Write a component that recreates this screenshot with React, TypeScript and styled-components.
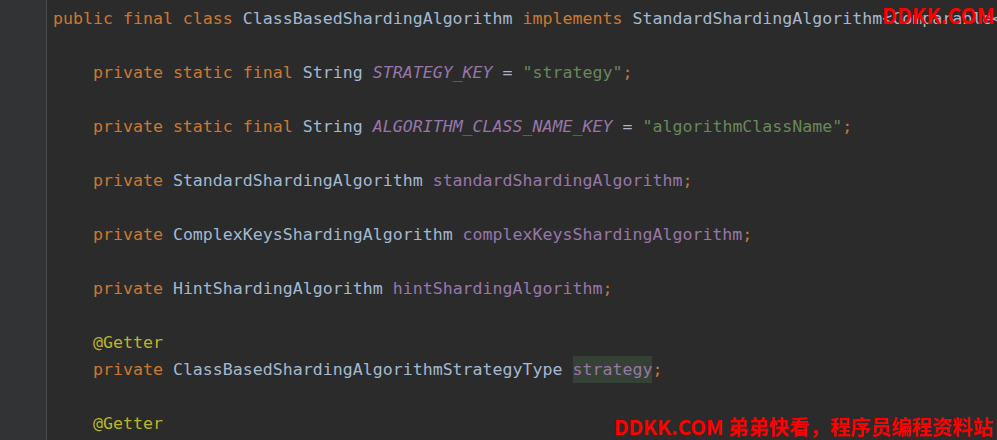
import styled, { createGlobalStyle } from "styled-components";

type Tok = [string, string?];

const C = {
  kw: "#cc7832",
  type: "#a4b8d0",
  plain: "#a9b7c6",
  field: "#9876aa",
  str: "#6a8759",
  ann: "#bbb529",
};

const lines: (Tok[] | null)[] = [
  [
    ["public final class ", "kw"],
    ["ClassBasedShardingAlgorithm ", "type"],
    ["implements ", "kw"],
    ["StandardShardingAlgorithm<Comparable<?>>", "type"],
    [", ", "kw"],
    ["ComplexKeysShardingAlgorithm<Comparable<?>>", "type"],
  ],
  null,
  [
    ["    private static final ", "kw"],
    ["String ", "type"],
    ["STRATEGY_KEY", "const"],
    [" = ", "plain"],
    ['"strategy"', "str"],
    [";", "kw"],
  ],
  null,
  [
    ["    private static final ", "kw"],
    ["String ", "type"],
    ["ALGORITHM_CLASS_NAME_KEY", "const"],
    [" = ", "plain"],
    ['"algorithmClassName"', "str"],
    [";", "kw"],
  ],
  null,
  [
    ["    private ", "kw"],
    ["StandardShardingAlgorithm ", "type"],
    ["standardShardingAlgorithm", "field"],
    [";", "kw"],
  ],
  null,
  [
    ["    private ", "kw"],
    ["ComplexKeysShardingAlgorithm ", "type"],
    ["complexKeysShardingAlgorithm", "field"],
    [";", "kw"],
  ],
  null,
  [
    ["    private ", "kw"],
    ["HintShardingAlgorithm ", "type"],
    ["hintShardingAlgorithm", "field"],
    [";", "kw"],
  ],
  null,
  [["    @Getter", "ann"]],
  [
    ["    private ", "kw"],
    ["ClassBasedShardingAlgorithmStrategyType ", "type"],
    ["strategy", "mark"],
    [";", "kw"],
  ],
  null,
  [["    @Getter", "ann"]],
];

const App = () => {
  return (
    <Editor>
      <GlobalStyle />
      <Gutter />
      <Code>
        {lines.map((line, i) => (
          <Line key={i}>
            {line
              ? line.map(([text, kind], j) => (
                  <Tok key={j} kind={kind || "plain"}>
                    {text}
                  </Tok>
                ))
              : " "}
          </Line>
        ))}
      </Code>
      <MarkTop>DDKK.COM</MarkTop>
      <MarkBottom>DDKK.COM 弟弟快看，程序员编程资料站</MarkBottom>
    </Editor>
  );
};

export default App;

const GlobalStyle = createGlobalStyle`
  html, body {
    margin: 0;
    padding: 0;
    background: #2b2b2b;
  }
`;

const Editor = styled.div`
  position: relative;
  width: 997px;
  height: 440px;
  overflow: hidden;
  display: flex;
  background: #2b2b2b;
`;

const Gutter = styled.div`
  width: 46px;
  flex-shrink: 0;
  background: #313335;
  border-right: 1px solid #4a4c4e;
`;

const Code = styled.div`
  flex: 1;
  padding: 5px 0 0 6px;
  font-family: "DejaVu Sans Mono", "Liberation Mono", monospace;
  font-size: 16.6px;
  line-height: 27px;
  white-space: pre;
  overflow: hidden;
`;

const Line = styled.div`
  height: 27px;
  color: ${C.plain};
`;

const Tok = styled.span<{ kind: string }>`
  color: ${({ kind }) =>
    kind === "const" || kind === "field" || kind === "mark"
      ? C.field
      : (C as Record<string, string>)[kind] || C.plain};
  font-style: ${({ kind }) => (kind === "const" ? "italic" : "normal")};
  background: ${({ kind }) => (kind === "mark" ? "#344134" : "transparent")};
  display: inline-block;
  height: 27px;
`;

const Mark = styled.div`
  position: absolute;
  color: #ff0000;
  font-family: "Noto Sans CJK SC", "Liberation Sans", sans-serif;
  font-weight: 700;
  font-size: 20px;
  line-height: 1;
  white-space: nowrap;
`;

const MarkTop = styled(Mark)`
  top: 5px;
  left: 882px;
  font-size: 21px;
`;

const MarkBottom = styled(Mark)`
  top: 416px;
  left: 614px;
  font-size: 20.4px;
`;
